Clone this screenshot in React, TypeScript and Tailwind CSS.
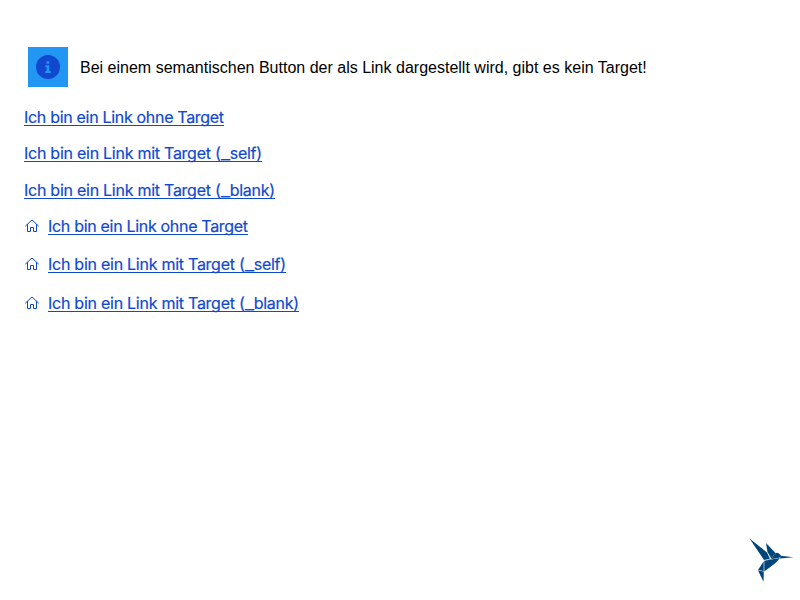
const font = "font-['Liberation_Sans',Arial,sans-serif]";

function InfoIcon() {
  return (
    <svg width="24" height="24" viewBox="0 0 24 24">
      <circle cx="12" cy="12" r="12" fill="#1148d0" />
      <path fill="#2196f3" d="M10.500 6.200h2.800v2.500h-2.800zM9.300 10.200h4v5.900h1.500V18H9.200v-1.900h1.400v-4H9.300z" />
    </svg>
  );
}

function HomeIcon() {
  return (
    <svg className="mr-2 shrink-0" width="16" height="16" viewBox="0 0 16 16" fill="none" stroke="#1148d0" strokeWidth="1">
      <path d="M1.500 8 8 2l6.500 6M3.500 6.500v7h3v-4h3v4h3v-7" strokeLinejoin="round" strokeLinecap="round" />
    </svg>
  );
}

function Link({ target, icon, gap }: { target?: string; icon?: boolean; gap: string }) {
  return (
    <div className={`flex items-center h-[18px] ${gap}`}>
      {icon && <HomeIcon />}
      <a
        href="#"
        className={`h-[18px] border-b border-[#1148d0] font-['Inter',sans-serif] leading-[18px] whitespace-nowrap text-[#1148d0] [-webkit-text-stroke:0.2px_#1148d0] ${
          target ? "tracking-[-0.26px]" : "tracking-[-0.31px]"
        }`}
      >
        {target ? (
          <>
            Ich bin ein Link mit Target (
            <span className="inline-block w-[9.2px] origin-left scale-x-[1.25]">_</span>
            {target})
          </>
        ) : (
          "Ich bin ein Link ohne Target"
        )}
      </a>
    </div>
  );
}

export default function App() {
  return (
    <main className={`flex h-[600px] w-[800px] flex-col overflow-hidden bg-white text-base text-black ${font}`}>
      <div className="mt-[47px] ml-7 flex h-10 items-center gap-3">
        <div className="flex size-10 items-center justify-center bg-[#2196f3]">
          <InfoIcon />
        </div>
        <p className="pt-0.5 tracking-[0.006px]">Bei einem semantischen Button der als Link dargestellt wird, gibt es kein Target!</p>
      </div>
      <div className="ml-6 flex flex-col items-start">
        <Link gap="mt-[21px]" />
        <Link gap="mt-[18px]" target="self" />
        <Link gap="mt-[19px]" target="blank" />
        <Link icon gap="mt-[18px]" />
        <Link icon gap="mt-[20px]" target="self" />
        <Link icon gap="mt-[21px]" target="blank" />
      </div>
      <svg className="mt-auto mr-[6px] mb-[17px] self-end" width="45" height="45" viewBox="0 0 45 45" fill="#00457a">
        <path d="M.5.5 18 14.500 21 20.700 15 22Z" />
        <path d="M17 5 26.500 15 22.300 20.500 18.500 14Z" />
        <path d="M22.500 20.700 26 15.500Q29 13.500 32 17.500L31 19.500 16 22.500Z" />
        <path d="M31.500 17.800 44.500 19.300 31 20.500Z" />
        <path d="M15.300 22.800 31 20 26.500 25 15.300 33.500Z" />
        <path d="M14.700 23.300V33L9 32Z" />
        <path d="M9 32.600 14.800 33.500 14.500 43.800Z" />
      </svg>
    </main>
  );
}
